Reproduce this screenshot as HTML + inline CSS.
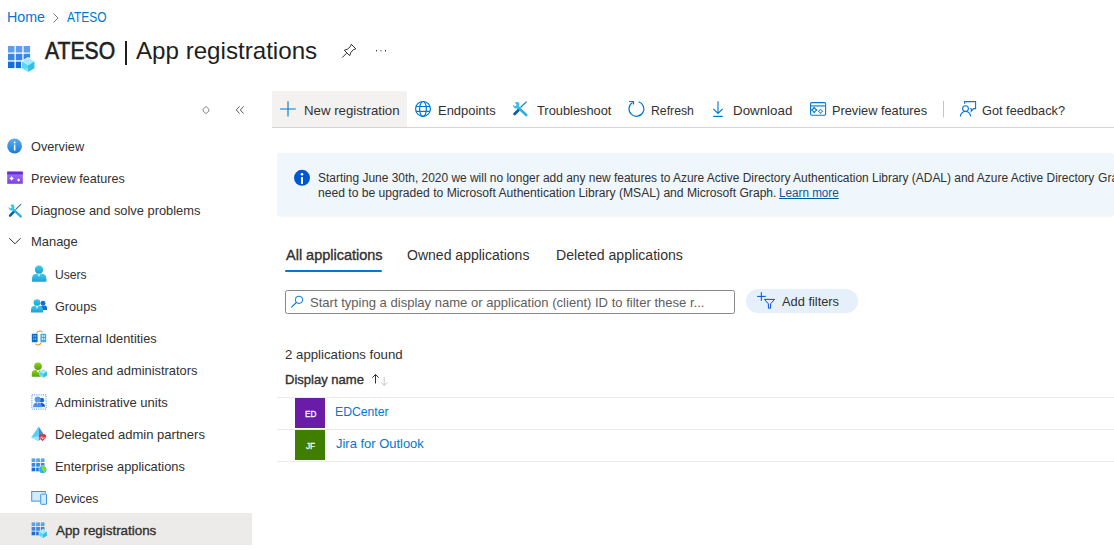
<!DOCTYPE html>
<html><head><meta charset="utf-8"><title>ATESO | App registrations</title>
<style>
html,body{margin:0;padding:0}
body{width:1114px;height:550px;overflow:hidden;position:relative;background:#fff;font-family:"Liberation Sans",sans-serif}
.t{position:absolute;white-space:nowrap;line-height:1;transform-origin:0 0;font-family:"Liberation Sans",sans-serif}
.ov{position:absolute;left:0;top:0}
.sel{position:absolute;left:0;top:513px;width:252px;height:32px;background:#edebe9}
.bar{position:absolute;left:125px;top:41px;width:1.6px;height:24px;background:#201f1e}
.av{position:absolute;color:#fff;font-weight:400;font-size:9.5px;line-height:1;-webkit-text-stroke:0.3px #fff;font-family:"Liberation Sans",sans-serif;transform-origin:0 0}
</style></head><body>
<div class="sel"></div>
<svg class="ov" width="1114" height="550" viewBox="0 0 1114 550">
<defs>
 <linearGradient id="gGrid" x1="0" y1="0" x2="0" y2="1"><stop offset="0" stop-color="#5ea2ee"/><stop offset="1" stop-color="#0b6cd6"/></linearGradient>
 <linearGradient id="gInfo" x1="0" y1="0" x2="0" y2="1"><stop offset="0" stop-color="#5aaef0"/><stop offset="1" stop-color="#1a7bd6"/></linearGradient>
 <linearGradient id="gPrev" x1="0" y1="0" x2="0" y2="1"><stop offset="0" stop-color="#a37bf2"/><stop offset="1" stop-color="#7c3fe4"/></linearGradient>
 <linearGradient id="gUser" x1="0" y1="0" x2="0" y2="1"><stop offset="0" stop-color="#3ccaf0"/><stop offset="1" stop-color="#1ca0d2"/></linearGradient>
 <linearGradient id="gGreen" x1="0" y1="0" x2="0" y2="1"><stop offset="0" stop-color="#8ed41e"/><stop offset="1" stop-color="#5a9e12"/></linearGradient>
</defs>
<polyline points="53.5,13.5 58,18 53.5,22.5" fill="none" stroke="#7a7876" stroke-width="1"/>
<rect x="8.00" y="46.00" width="6.5" height="6.5" fill="#5c9ff0"/><rect x="15.80" y="46.00" width="6.5" height="6.5" fill="#5c9ff0"/><rect x="23.60" y="46.00" width="6.5" height="6.5" fill="#5c9ff0"/><rect x="8.00" y="53.80" width="6.5" height="6.5" fill="#3a86e4"/><rect x="15.80" y="53.80" width="6.5" height="6.5" fill="#3a86e4"/><rect x="23.60" y="53.80" width="6.5" height="6.5" fill="#3a86e4"/><rect x="8.00" y="61.60" width="6.5" height="6.5" fill="#1470d6"/><rect x="15.80" y="61.60" width="6.5" height="6.5" fill="#1470d6"/><rect x="23.60" y="61.60" width="6.5" height="6.5" fill="#1470d6"/>
<polygon points="28.2,58.2 34.3,61.872 34.3,68.128 28.2,71.8 22.1,68.128 22.1,61.872" fill="#fff" stroke="#fff" stroke-width="2.0" stroke-linejoin="round"/><polygon points="28.2,58.2 34.3,61.872 34.3,68.128 28.2,71.8 22.1,68.128 22.1,61.872" fill="#50d9fa"/><polygon points="28.2,58.2 34.3,61.872 28.2,65.544 22.1,61.872" fill="#a6eafc"/><polygon points="28.2,65.544 34.3,61.872 34.3,68.128 28.2,71.8" fill="#32bfe0"/><polygon points="22.1,68.128 28.2,68.3592 28.2,71.8" fill="#7fe3fb"/>
<path d="M351.3,44.3 L355.8,48.8 L353.4,49.6 L350.8,52.6 L349.7,55.7 L344.3,50.3 L347.4,49.2 L350.4,46.6 Z" fill="none" stroke="#323130" stroke-width="1" stroke-linejoin="round"/><line x1="342.2" y1="57.6" x2="346.6" y2="53.2" stroke="#323130" stroke-width="1"/>
<rect x="376" y="50" width="1" height="1.4" fill="#323130"/><rect x="380.5" y="50" width="1" height="1.4" fill="#605e5c"/><rect x="385" y="50" width="1" height="1.4" fill="#323130"/>
<polygon points="206,106.5 208.8,109 208.8,111.2 206,113.6 203.2,111.2 203.2,109" fill="none" stroke="#8a8886" stroke-width="1"/>
<polyline points="239.6,106.3 236.3,110 239.6,113.6" fill="none" stroke="#605e5c" stroke-width="1"/><polyline points="243.7,106.3 240.3,110 243.7,113.6" fill="none" stroke="#605e5c" stroke-width="1"/>
<rect x="272" y="91" width="135" height="36" fill="#f3f2f1"/>
<rect x="272" y="127" width="842" height="1" fill="#d6d4d2"/>
<path d="M288,101.2 V116.6 M280,109 H295.8" stroke="#0078d4" stroke-width="1.1" fill="none"/>
<g fill="none" stroke="#0078d4" stroke-width="1.2"><circle cx="423" cy="108.9" r="7.4"/><ellipse cx="423" cy="108.9" rx="3.4" ry="7.4"/><path d="M416,106.5 H430 M416,111.3 H430"/></g>
<g transform="translate(508,96) scale(1.0)"><line x1="12.5" y1="11.5" x2="18.6" y2="5.6" stroke="#1e78c0" stroke-width="1.2"/><line x1="6.6" y1="18" x2="10.8" y2="13.8" stroke="#0a5ea8" stroke-width="2.8" stroke-linecap="round"/><line x1="9.6" y1="11" x2="18.2" y2="19" stroke="#2eb0dc" stroke-width="2.6" stroke-linecap="round"/><path d="M10.6,6.4 C9.4,5.6 7.6,5.8 6.9,6.8 L8.5,8.6 L7.9,10 L6.3,10.1 L5.3,8.5 C4.7,10.2 5.6,12 7.4,12.4 C8.6,12.7 9.6,12.4 10.3,11.8 C11.4,10.6 11.8,7.6 10.6,6.4 Z" fill="#35c3ec"/></g>
<path d="M638.6,101.8 A7.4,7.4 0 1 1 632.5,102.6" fill="none" stroke="#0078d4" stroke-width="1.2"/><path d="M629,101.5 H633.5 V104.6" fill="none" stroke="#0078d4" stroke-width="1.2"/>
<path d="M718,101.2 V113.2 M713.3,108.9 L718,113.5 L722.7,108.9 M713.3,116.4 H722.7" fill="none" stroke="#0078d4" stroke-width="1.1"/>
<g fill="none" stroke="#0078d4" stroke-width="1.1"><rect x="810.6" y="102.6" width="15" height="12.6" rx="1.2"/><path d="M810.6,105.8 H825.6"/></g><rect x="811" y="105.2" width="14.4" height="1.4" fill="#6aaee6"/><path d="M814.2,107.2 Q814.984,109.216 817.0,110 Q814.984,110.784 814.2,112.8 Q813.416,110.784 811.4000000000001,110 Q813.416,109.216 814.2,107.2 Z" fill="none" stroke="#0078d4" stroke-width="1.1" stroke-linejoin="round"/><path d="M820.5,109.1 Q821.116,110.684 822.7,111.3 Q821.116,111.916 820.5,113.5 Q819.884,111.916 818.3,111.3 Q819.884,110.684 820.5,109.1 Z" fill="none" stroke="#0078d4" stroke-width="1.0" stroke-linejoin="round"/>
<rect x="943" y="101" width="1" height="16.5" fill="#c8c6c4"/>
<g fill="none" stroke="#0078d4" stroke-width="1.1"><path d="M964.6,103.8 V101.6 H975.6 V108.6 H973.6 L971.3,111.2 L971.5,109 L970.2,108.4"/><circle cx="965.5" cy="108.6" r="2.9"/><path d="M960.4,116.5 A5.1,5.1 0 0 1 970.6,116.5"/></g>
<circle cx="14.6" cy="146" r="7.4" fill="url(#gInfo)"/><circle cx="14.6" cy="142.6" r="1" fill="#fff"/><rect x="13.9" y="144.6" width="1.5" height="6" fill="#fff"/>
<rect x="7.2" y="171.6" width="15.6" height="12.2" fill="url(#gPrev)"/><rect x="7.2" y="171.6" width="15.6" height="2.8" fill="#6a2bd9"/><path d="M11.6,176.1 Q12.244,177.756 13.899999999999999,178.4 Q12.244,179.044 11.6,180.70000000000002 Q10.956,179.044 9.3,178.4 Q10.956,177.756 11.6,176.1 Z" fill="#fff"/><path d="M18.6,178.2 Q19.104000000000003,179.496 20.400000000000002,180 Q19.104000000000003,180.504 18.6,181.8 Q18.096,180.504 16.8,180 Q18.096,179.496 18.6,178.2 Z" fill="#fff"/>
<g transform="translate(4,199) scale(0.92)"><line x1="12.5" y1="11.5" x2="18.6" y2="5.6" stroke="#1e78c0" stroke-width="1.2"/><line x1="6.6" y1="18" x2="10.8" y2="13.8" stroke="#0a5ea8" stroke-width="2.8" stroke-linecap="round"/><line x1="9.6" y1="11" x2="18.2" y2="19" stroke="#2eb0dc" stroke-width="2.6" stroke-linecap="round"/><path d="M10.6,6.4 C9.4,5.6 7.6,5.8 6.9,6.8 L8.5,8.6 L7.9,10 L6.3,10.1 L5.3,8.5 C4.7,10.2 5.6,12 7.4,12.4 C8.6,12.7 9.6,12.4 10.3,11.8 C11.4,10.6 11.8,7.6 10.6,6.4 Z" fill="#35c3ec"/></g>
<polyline points="9.2,238.2 15,243.8 20.6,238.2" fill="none" stroke="#323130" stroke-width="1"/>
<circle cx="39" cy="269.8" r="4.2" fill="url(#gUser)"/><path d="M32,281.8 V278.84000000000003 Q32,273.8 37.04,273.8 H41.36 Q46.4,273.8 46.4,278.84000000000003 V281.8 Z" fill="url(#gUser)"/><path d="M37.4,273.8 L39,277.0 L40.6,273.8 Z" fill="#fff" fill-opacity="0.75"/>
<circle cx="43" cy="303.2" r="2.4" fill="#0f6fd4"/><path d="M40.4,310 V307.91 Q40.4,305.6 42.71,305.6 H44.69 Q47,305.6 47,307.91 V310 Z" fill="#0f6fd4"/>
<path d="M38.5,306 L41.2,304.2 L43,308" fill="#fff" opacity="0"/><circle cx="37" cy="302.6" r="3.4" fill="url(#gUser)"/><path d="M31,312.6 V310.0 Q31,305.8 35.2,305.8 H38.8 Q43,305.8 43,310.0 V312.6 Z" fill="url(#gUser)"/><path d="M35.4,305.8 L37,309.0 L38.6,305.8 Z" fill="#fff" fill-opacity="0.75"/>
<rect x="31.8" y="333.8" width="5.8" height="8.4" rx="0.6" fill="#0a6bc8"/><rect x="40.4" y="333.8" width="5.8" height="8.4" rx="0.6" fill="#4aa8dc"/><rect x="33.20" y="335.20" width="1.1" height="1.6" fill="#7cc0ee"/><rect x="35.10" y="335.20" width="1.1" height="1.6" fill="#7cc0ee"/><rect x="33.20" y="338.20" width="1.1" height="1.6" fill="#7cc0ee"/><rect x="35.10" y="338.20" width="1.1" height="1.6" fill="#7cc0ee"/><rect x="41.80" y="335.20" width="1.1" height="1.6" fill="#ffffff"/><rect x="43.70" y="335.20" width="1.1" height="1.6" fill="#ffffff"/><rect x="41.80" y="338.20" width="1.1" height="1.6" fill="#ffffff"/><rect x="43.70" y="338.20" width="1.1" height="1.6" fill="#ffffff"/><path d="M36.6,333.4 Q37.5,330.8 40.5,331 Q42,331.2 42.4,332.2" fill="none" stroke="#ff8c1a" stroke-width="1.1"/><path d="M41.2,342.6 Q40.5,345 37.5,345 Q36,344.8 35.6,343.6" fill="none" stroke="#ff8c1a" stroke-width="1.1"/>
<circle cx="38" cy="366.2" r="3.8" fill="url(#gGreen)"/><path d="M31.8,376.8 V373.57 Q31.8,370 35.37,370 H38.43 Q42,370 42,373.57 V376.8 Z" fill="url(#gGreen)"/><path d="M36.4,370 L38,373.2 L39.6,370 Z" fill="#fff" fill-opacity="0.75"/>
<polygon points="43.4,369.6 46.8,371.814 46.8,375.586 43.4,377.8 40.0,375.586 40.0,371.814" fill="#fff" stroke="#fff" stroke-width="1.0" stroke-linejoin="round"/><polygon points="43.4,369.6 46.8,371.814 46.8,375.586 43.4,377.8 40.0,375.586 40.0,371.814" fill="#50d9fa"/><polygon points="43.4,369.6 46.8,371.814 43.4,374.028 40.0,371.814" fill="#a6eafc"/><polygon points="43.4,374.028 46.8,371.814 46.8,375.586 43.4,377.8" fill="#32bfe0"/><polygon points="40.0,375.586 43.4,375.72540000000004 43.4,377.8" fill="#7fe3fb"/>
<rect x="31.9" y="394.9" width="14.2" height="14.2" fill="none" stroke="#3a8ee6" stroke-width="1" stroke-dasharray="1,1.2"/><circle cx="41.8" cy="400.2" r="2.4" fill="#1a6cc8"/><path d="M38.6,406.8 Q39,403.2 42,403 Q45,403.4 45,406.8 Z" fill="#0e5cb8"/><circle cx="37.6" cy="399.4" r="3" fill="#5a9ae8"/><path d="M33,407.2 Q33.2,402.4 37.6,402.2 Q42,402.4 42.2,407.2 Z" fill="#4f90e2"/><path d="M36.6,402.3 L37.6,404.6 L38.6,402.3 Z" fill="#fff" fill-opacity="0.7"/><polygon points="38.6,426.4 31.2,437.6 38.6,441 " fill="#55d0f5"/><polygon points="38.6,426.4 44.8,436 38.6,441" fill="#3b8fe0"/><polygon points="31.2,437.6 38.6,436 38.6,441" fill="#9fe6fb"/><path d="M42.6,441.2 L39.2,437.6 Q38.4,435.5 40,434.4 Q41.6,433.6 42.6,435 Q43.6,433.6 45.2,434.4 Q46.8,435.5 46,437.6 Z" fill="#e8303a"/><polyline points="39.6,438 41,438 41.8,436.6 42.8,439.2 43.6,437.8 45.6,437.8" fill="none" stroke="#fff" stroke-width="0.6"/>
<rect x="31.60" y="458.40" width="3.7" height="3.7" fill="#5c9ff0"/><rect x="36.20" y="458.40" width="3.7" height="3.7" fill="#5c9ff0"/><rect x="40.80" y="458.40" width="3.7" height="3.7" fill="#5c9ff0"/><rect x="31.60" y="463.00" width="3.7" height="3.7" fill="#3a86e4"/><rect x="36.20" y="463.00" width="3.7" height="3.7" fill="#3a86e4"/><rect x="40.80" y="463.00" width="3.7" height="3.7" fill="#3a86e4"/><rect x="31.60" y="467.60" width="3.7" height="3.7" fill="#1470d6"/><rect x="36.20" y="467.60" width="3.7" height="3.7" fill="#1470d6"/><rect x="40.80" y="467.60" width="3.7" height="3.7" fill="#1470d6"/>
<circle cx="42.8" cy="469.6" r="4.2" fill="#fff"/><circle cx="42.8" cy="469.6" r="3.7" fill="#2ab6e6"/><path d="M41.6,466.4 Q44,465.8 45.6,467.6 Q46.4,470 45,472 L43.8,473 Q43.2,470.6 42.2,469.8 Q41.4,468 41.6,466.4 Z" fill="#9ad61e"/>
<rect x="31.7" y="491.5" width="13.6" height="9.6" fill="#d4ebfb" stroke="#3a94e8" stroke-width="1"/><rect x="40" y="493.6" width="7" height="11.2" rx="0.8" fill="#fff"/><rect x="40.7" y="494.1" width="5.8" height="10.2" rx="0.6" fill="#d4ebfb" stroke="#3a94e8" stroke-width="1"/>
<rect x="31.60" y="522.40" width="3.7" height="3.7" fill="#5c9ff0"/><rect x="36.20" y="522.40" width="3.7" height="3.7" fill="#5c9ff0"/><rect x="40.80" y="522.40" width="3.7" height="3.7" fill="#5c9ff0"/><rect x="31.60" y="527.00" width="3.7" height="3.7" fill="#3a86e4"/><rect x="36.20" y="527.00" width="3.7" height="3.7" fill="#3a86e4"/><rect x="40.80" y="527.00" width="3.7" height="3.7" fill="#3a86e4"/><rect x="31.60" y="531.60" width="3.7" height="3.7" fill="#1470d6"/><rect x="36.20" y="531.60" width="3.7" height="3.7" fill="#1470d6"/><rect x="40.80" y="531.60" width="3.7" height="3.7" fill="#1470d6"/>
<polygon points="43,529.6 46.8,531.868 46.8,535.732 43,538.0 39.2,535.732 39.2,531.868" fill="#fff" stroke="#fff" stroke-width="1.0" stroke-linejoin="round"/><polygon points="43,529.6 46.8,531.868 46.8,535.732 43,538.0 39.2,535.732 39.2,531.868" fill="#50d9fa"/><polygon points="43,529.6 46.8,531.868 43,534.136 39.2,531.868" fill="#a6eafc"/><polygon points="43,534.136 46.8,531.868 46.8,535.732 43,538.0" fill="#32bfe0"/><polygon points="39.2,535.732 43,535.8747999999999 43,538.0" fill="#7fe3fb"/>
<rect x="277" y="153" width="837" height="63.5" rx="2" fill="#eff6fc"/><circle cx="302" cy="177.8" r="8" fill="#0058d1"/><circle cx="302" cy="174.2" r="1.3" fill="#fff"/><rect x="301" y="177" width="2" height="7" fill="#fff"/>
<rect x="285" y="270" width="97" height="2" rx="1" fill="#0078d4"/>
<rect x="285.5" y="290.5" width="449" height="23" rx="2" fill="#fff" stroke="#8a8886" stroke-width="1"/><circle cx="299" cy="299.8" r="3.7" fill="none" stroke="#0078d4" stroke-width="1"/><line x1="296.3" y1="302.5" x2="291.6" y2="307.2" stroke="#0078d4" stroke-width="1.1" stroke-linecap="round"/>
<rect x="746" y="289" width="112" height="24" rx="12" fill="#e5f0fb"/><path d="M761.3,292.2 V300.9 M757.1,296.4 H765.8" stroke="#0050d0" stroke-width="1" fill="none"/><path d="M764.4,299.4 H774.6 L770.6,303.8 V308.2 H768.4 V303.8 Z" fill="none" stroke="#0050d0" stroke-width="1" stroke-linejoin="round"/>
<path d="M375.5,374.6 V383.5 M372.3,377.7 L375.5,374.5 L378.7,377.7" fill="none" stroke="#323130" stroke-width="1"/><path d="M384.2,377 V385.4 M381,382.3 L384.2,385.5 L387.4,382.3" fill="none" stroke="#c8c6c4" stroke-width="1"/>
<rect x="277" y="397" width="837" height="1" fill="#edebe9"/><rect x="277" y="429" width="837" height="1" fill="#edebe9"/><rect x="277" y="461" width="837" height="1" fill="#edebe9"/>
<rect x="295" y="398" width="30" height="30" fill="#6a1ca8"/><rect x="295" y="430" width="30" height="30" fill="#407e02"/>
</svg>
<div class="bar"></div>
<span class="t" style="left:6.98px;top:10px;font-size:14px;font-weight:400;color:#0078d4;transform:scaleX(1.0177);">Home</span>
<span class="t" style="left:66.86px;top:10px;font-size:14px;font-weight:400;color:#0078d4;transform:scaleX(0.8527);">ATESO</span>
<span class="t" style="left:45.33px;top:39px;font-size:24px;font-weight:400;color:#201f1e;-webkit-text-stroke:0.6px #201f1e;transform:scaleX(0.8812);">ATESO</span>
<span class="t" style="left:136.20px;top:39px;font-size:24px;font-weight:400;color:#201f1e;transform:scaleX(1.0057);">App registrations</span>
<span class="t" style="left:304.17px;top:104px;font-size:13px;font-weight:400;color:#323130;transform:scaleX(1.0176);">New registration</span>
<span class="t" style="left:438.40px;top:104px;font-size:13px;font-weight:400;color:#323130;transform:scaleX(0.9971);">Endpoints</span>
<span class="t" style="left:537.09px;top:104px;font-size:13px;font-weight:400;color:#323130;transform:scaleX(0.9871);">Troubleshoot</span>
<span class="t" style="left:650.85px;top:104px;font-size:13px;font-weight:400;color:#323130;transform:scaleX(0.9419);">Refresh</span>
<span class="t" style="left:733.47px;top:104px;font-size:13px;font-weight:400;color:#323130;transform:scaleX(1.0256);">Download</span>
<span class="t" style="left:832.02px;top:104px;font-size:13px;font-weight:400;color:#323130;transform:scaleX(0.9813);">Preview features</span>
<span class="t" style="left:982.30px;top:104px;font-size:13px;font-weight:400;color:#323130;transform:scaleX(0.9814);">Got feedback?</span>
<span class="t" style="left:31.00px;top:140px;font-size:13px;font-weight:400;color:#323130;transform:scaleX(0.9803);">Overview</span>
<span class="t" style="left:31.00px;top:172px;font-size:13px;font-weight:400;color:#323130;transform:scaleX(0.9679);">Preview features</span>
<span class="t" style="left:31.00px;top:204px;font-size:13px;font-weight:400;color:#323130;transform:scaleX(0.9889);">Diagnose and solve problems</span>
<span class="t" style="left:31.00px;top:235px;font-size:13px;font-weight:400;color:#323130;transform:scaleX(0.9941);">Manage</span>
<span class="t" style="left:55.00px;top:268px;font-size:13px;font-weight:400;color:#323130;transform:scaleX(0.9317);">Users</span>
<span class="t" style="left:55.00px;top:300px;font-size:13px;font-weight:400;color:#323130;transform:scaleX(0.9742);">Groups</span>
<span class="t" style="left:55.00px;top:332px;font-size:13px;font-weight:400;color:#323130;transform:scaleX(0.9835);">External Identities</span>
<span class="t" style="left:55.00px;top:364px;font-size:13px;font-weight:400;color:#323130;transform:scaleX(0.9910);">Roles and administrators</span>
<span class="t" style="left:55.00px;top:396px;font-size:13px;font-weight:400;color:#323130;transform:scaleX(1.0010);">Administrative units</span>
<span class="t" style="left:55.00px;top:428px;font-size:13px;font-weight:400;color:#323130;transform:scaleX(1.0021);">Delegated admin partners</span>
<span class="t" style="left:55.00px;top:460px;font-size:13px;font-weight:400;color:#323130;transform:scaleX(0.9871);">Enterprise applications</span>
<span class="t" style="left:55.00px;top:492px;font-size:13px;font-weight:400;color:#323130;transform:scaleX(0.9364);">Devices</span>
<span class="t" style="left:55.50px;top:524px;font-size:13px;font-weight:400;color:#323130;-webkit-text-stroke:0.35px #323130;transform:scaleX(1.0280);">App registrations</span>
<span class="t" style="left:318.30px;top:172px;font-size:12px;font-weight:400;color:#323130;transform:scaleX(0.9947);">Starting June 30th, 2020 we will no longer add any new features to Azure Active Directory Authentication Library (ADAL) and Azure Active Directory</span>
<span class="t" style="left:1098.10px;top:172px;font-size:12px;font-weight:400;color:#323130;transform:scaleX(1.0000);">Graph API. We will continue</span>
<span class="t" style="left:318.30px;top:187px;font-size:12px;font-weight:400;color:#323130;transform:scaleX(1.0093);">need to be upgraded to Microsoft Authentication Library (MSAL) and Microsoft Graph.</span>
<span class="t" style="left:778.66px;top:187px;font-size:12px;font-weight:400;color:#005a9e;transform:scaleX(0.9738);text-decoration:underline;">Learn more</span>
<span class="t" style="left:286.22px;top:248px;font-size:14px;font-weight:400;color:#323130;-webkit-text-stroke:0.35px #323130;transform:scaleX(1.0345);">All applications</span>
<span class="t" style="left:406.60px;top:248px;font-size:14px;font-weight:400;color:#323130;transform:scaleX(1.0017);">Owned applications</span>
<span class="t" style="left:555.89px;top:248px;font-size:14px;font-weight:400;color:#323130;transform:scaleX(1.0066);">Deleted applications</span>
<span class="t" style="left:310.20px;top:296px;font-size:13px;font-weight:400;color:#605e5c;transform:scaleX(1.0036);">Start typing a display name or application (client) ID to filter these r...</span>
<span class="t" style="left:781.60px;top:295px;font-size:13px;font-weight:400;color:#323130;transform:scaleX(0.9866);">Add filters</span>
<span class="t" style="left:285.19px;top:348px;font-size:13px;font-weight:400;color:#323130;transform:scaleX(1.0177);">2 applications found</span>
<span class="t" style="left:284.97px;top:373px;font-size:13px;font-weight:400;color:#323130;-webkit-text-stroke:0.35px #323130;transform:scaleX(1.0028);">Display name</span>
<span class="t" style="left:334.98px;top:405px;font-size:13px;font-weight:400;color:#0078d4;transform:scaleX(0.9395);">EDCenter</span>
<span class="t" style="left:336.29px;top:437px;font-size:13px;font-weight:400;color:#0078d4;transform:scaleX(0.9958);">Jira for Outlook</span>
<span class="av" style="left:304.6px;top:409px;transform:scaleX(0.86)">ED</span>
<span class="av" style="left:305.6px;top:441px;transform:scaleX(0.86)">JF</span>
</body></html>
